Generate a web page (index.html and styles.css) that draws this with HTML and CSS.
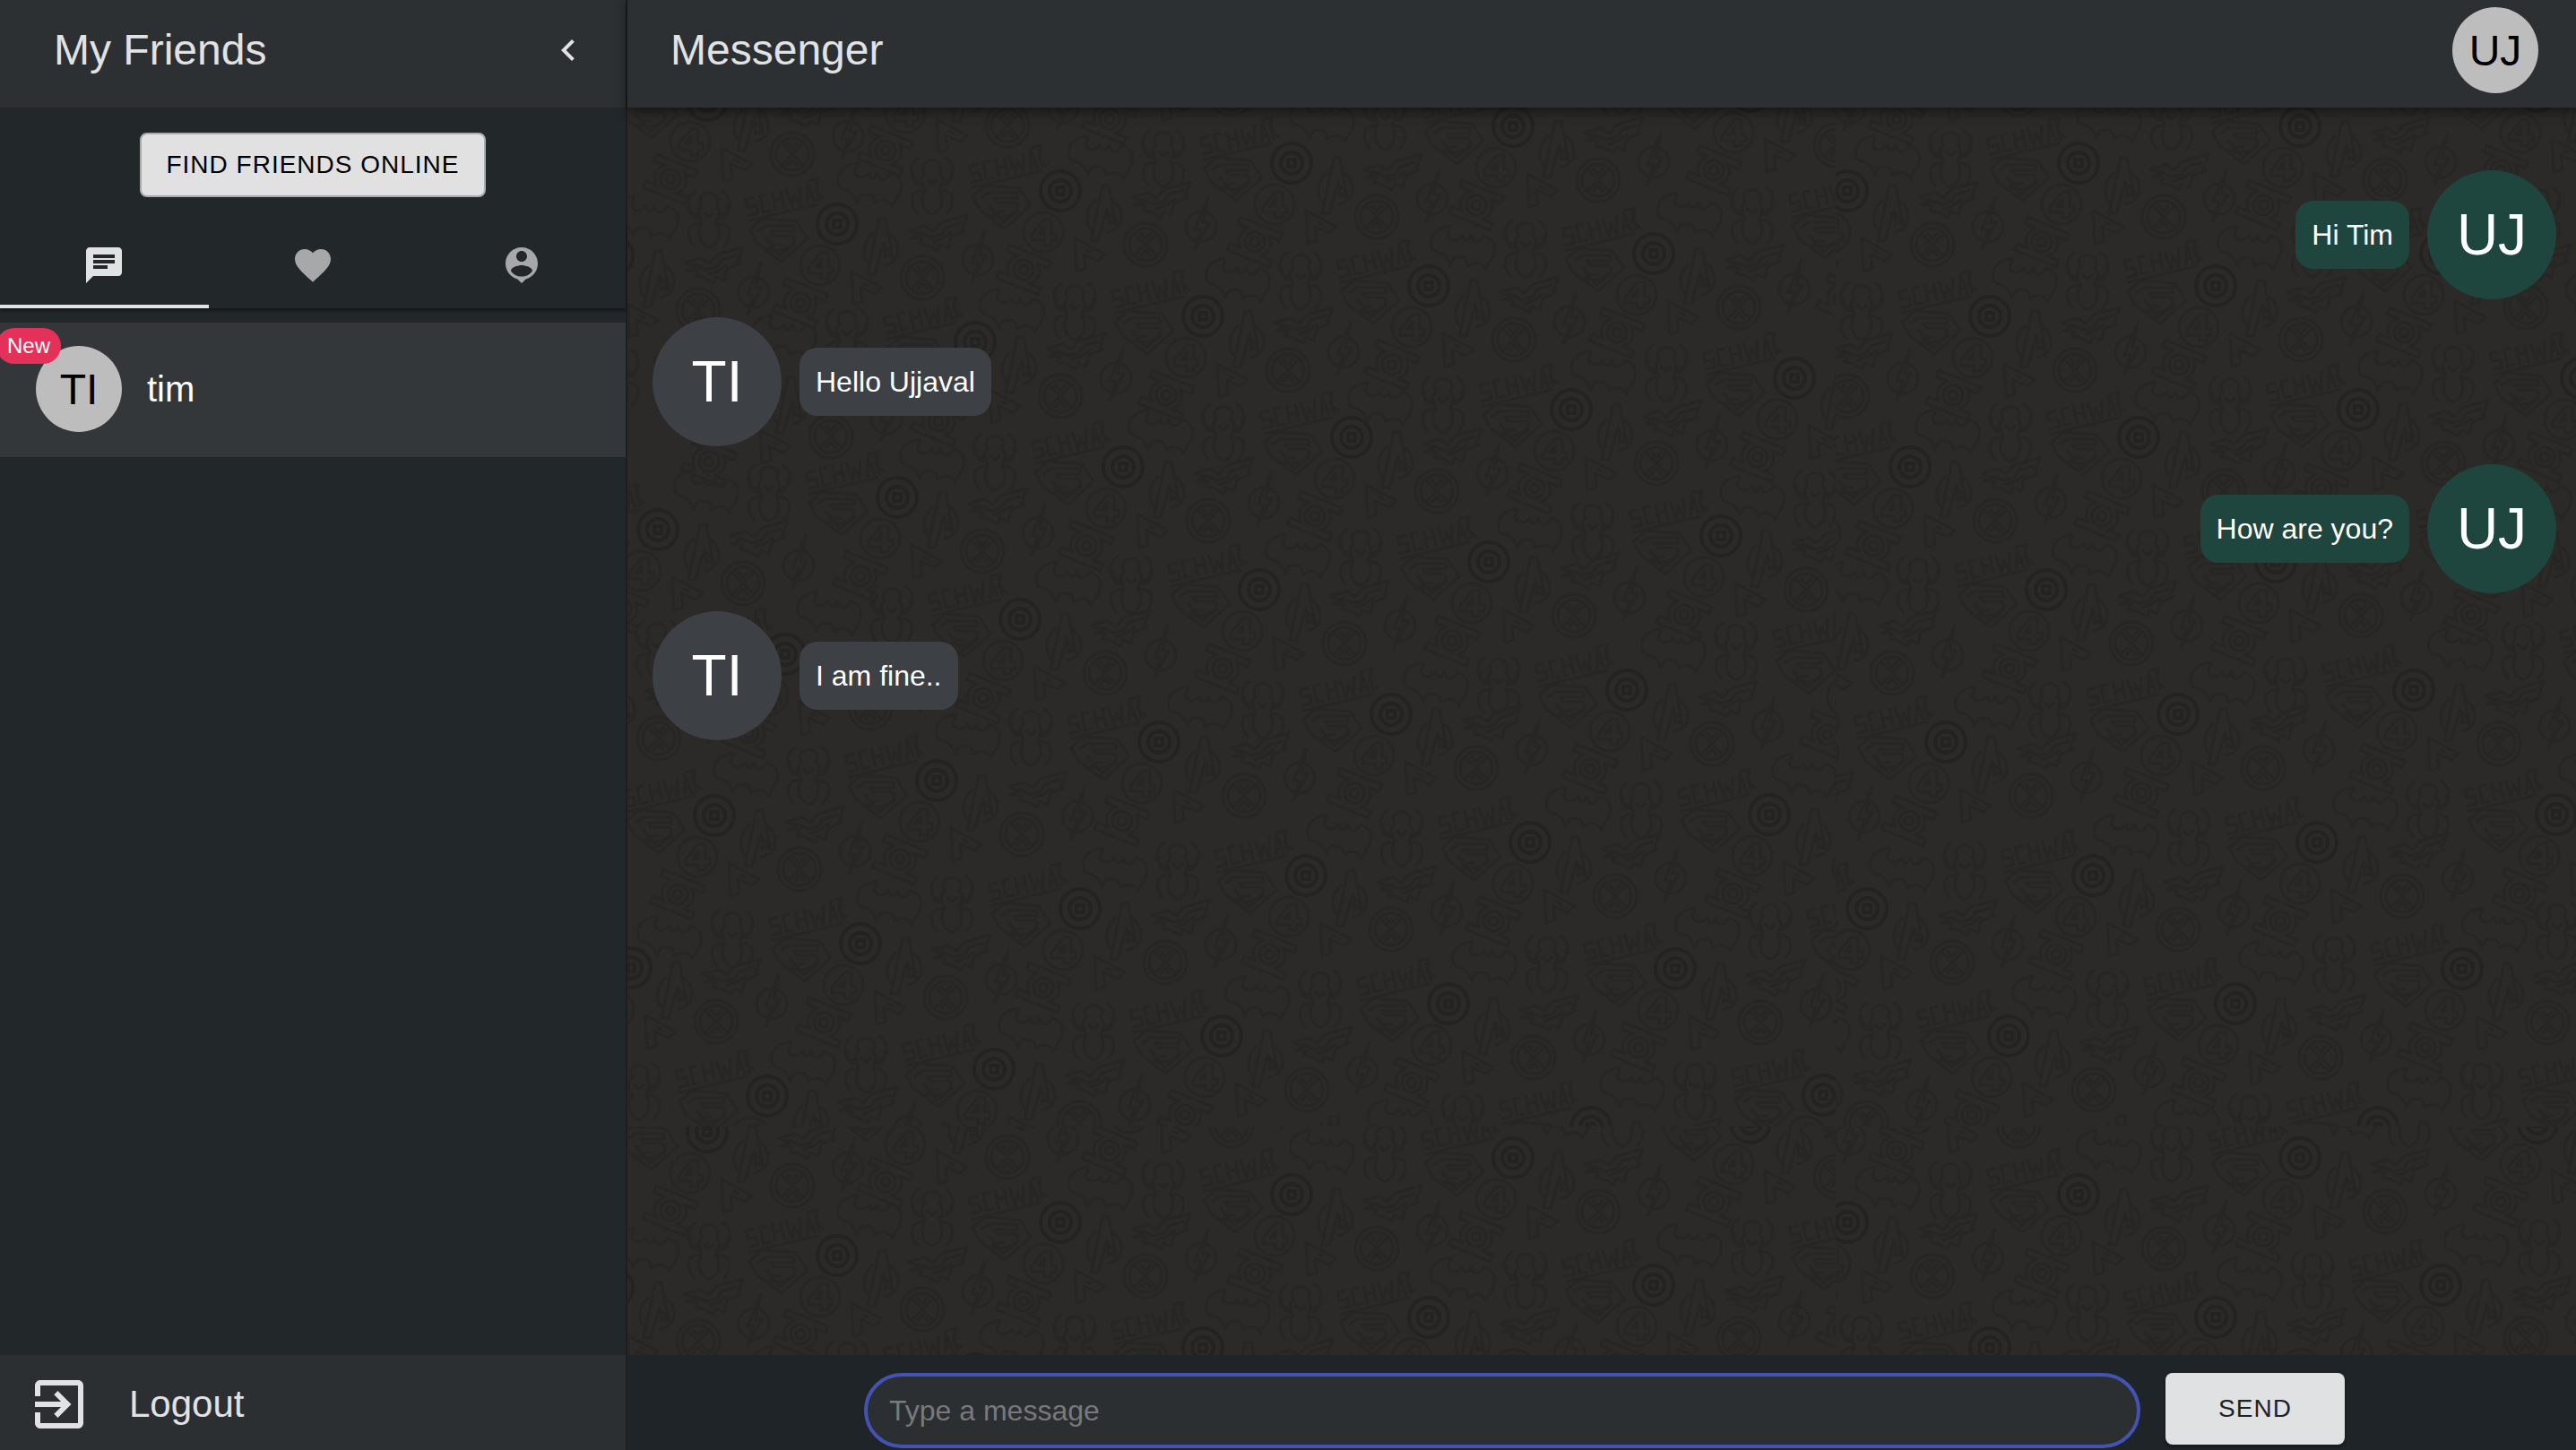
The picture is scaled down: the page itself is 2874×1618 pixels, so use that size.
FILE: index.html
```html
<!DOCTYPE html>
<html lang="en">
<head>
<meta charset="utf-8">
<title>Messenger</title>
<link rel="stylesheet" href="styles.css">
</head>
<body>
<div class="app">
  <aside class="sidebar">
    <header class="bar">
      <h2 class="title">My Friends</h2>
      <button class="icon-button" type="button" aria-label="Close friends list">
        <svg class="icon" viewBox="0 0 24 24"><path d="M15.41 7.41L14 6l-6 6 6 6 1.41-1.41L10.83 12z"/></svg>
      </button>
    </header>
    <div class="find">
      <button class="find-button" type="button">FIND FRIENDS ONLINE</button>
    </div>
    <nav class="tabs" role="tablist">
      <button class="tab tab-active" type="button" role="tab" aria-selected="true" aria-label="Chats">
        <svg class="icon" viewBox="0 0 24 24"><path d="M20 2H4c-1.1 0-1.99.9-1.99 2L2 22l4-4h14c1.1 0 2-.9 2-2V4c0-1.1-.9-2-2-2zM6 9h12v2H6V9zm8 5H6v-2h8v2zm4-6H6V6h12v2z"/></svg>
      </button>
      <button class="tab" type="button" role="tab" aria-selected="false" aria-label="Favourites">
        <svg class="icon" viewBox="0 0 24 24"><path d="M12 21.35l-1.45-1.32C5.4 15.36 2 12.28 2 8.5 2 5.42 4.42 3 7.5 3c1.74 0 3.41.81 4.5 2.09C13.09 3.81 14.76 3 16.5 3 19.58 3 22 5.42 22 8.5c0 3.78-3.4 6.86-8.55 11.54L12 21.35z"/></svg>
      </button>
      <button class="tab" type="button" role="tab" aria-selected="false" aria-label="People">
        <svg class="icon" viewBox="0 0 24 24"><path d="M12 2c-4.97 0-9 4.03-9 9 0 4.17 2.84 7.67 6.69 8.69L12 22l2.31-2.31C18.16 18.67 21 15.17 21 11c0-4.97-4.03-9-9-9zm0 2c1.66 0 3 1.34 3 3s-1.34 3-3 3-3-1.34-3-3 1.34-3 3-3zm0 14.3c-2.5 0-4.71-1.28-6-3.22.03-1.99 4-3.08 6-3.08 1.99 0 5.97 1.09 6 3.08-1.29 1.94-3.5 3.22-6 3.22z"/></svg>
      </button>
    </nav>
    <ul class="friends">
      <li class="friend">
        <span class="avatar avatar-small">TI<span class="badge">New</span></span>
        <span class="friend-name">tim</span>
      </li>
    </ul>
    <button class="logout" type="button">
      <svg class="icon-large" viewBox="0 0 24 24"><path d="M10.09 15.59L11.5 17l5-5-5-5-1.41 1.41L12.67 11H3v2h9.67l-2.58 2.59zM19 3H5c-1.11 0-2 .9-2 2v4h2V5h14v14H5v-4H3v4c0 1.1.89 2 2 2h14c1.1 0 2-.9 2-2V5c0-1.1-.9-2-2-2z"/></svg>
      Logout
    </button>
  </aside>

  <main class="chat">
    <header class="bar chat-bar">
      <h1 class="title">Messenger</h1>
      <span class="avatar avatar-small">UJ</span>
    </header>

    <section class="messages">
      <svg class="wallpaper" aria-hidden="true">
        <defs>
          <g id="motif">
            <g class="ring">
              <circle r="22"/><circle r="12"/>
              <path d="M-4-4H4V4H-4Z"/>
            </g>
            <g transform="translate(49 25)">
              <path d="M-2-31H5L13 13L5 9L3-4L-7 31H-15Z"/>
              <path d="M-9-15C-24-2-20 16-12 21M10-14C24-2 22 18 3 21"/>
              <path d="M2-2L13 8L3 12"/>
            </g>
            <g transform="translate(112 12)">
              <path d="M-32-5L-14-10L-5-4L4-14L33-22L27-6L30-4L15 2L12 15L3 11L0 18L-10 12L-20 10L-17 4L-30 4L-20 0Z"/>
              <path d="M-22-3L-8 3L4 0L9-8L26-13M-6 8L6 4L16-3"/>
            </g>
            <g transform="translate(95 60)">
              <circle r="24"/><circle r="18"/>
              <path d="M-13-13L13 13M13-13L-13 13M-6-13L0-6L6-13M-6 13L0 6L6 13"/>
            </g>
            <g transform="translate(-19 46)">
              <circle r="22"/>
              <path d="M9 15V9H14V2H9V-14H1L-13 3V9H1V15ZM1 2H-5L1-6Z"/>
            </g>
            <g transform="translate(157 40)">
              <circle r="17"/>
              <path d="M8-33L-7 3H0L-7 25L9-5H2Z"/>
            </g>
            <g transform="translate(-41 88) rotate(22)">
              <circle r="11"/><circle r="5"/>
              <path d="M-25-20H25V-12H12C20-5 20 5 12 12H25V20H-25V12H-12C-20 5-20-5-12-12H-25Z"/>
            </g>
            <path transform="translate(32 73)" d="M-16-20L-14 17L-4 14L-6-2L10 5L18-2ZM-3-7L3-4"/>
            <g transform="translate(-66 17)">
              <path d="M-32-11L-18-23L20-20L33-1L4 25L-24 4Z"/>
              <path d="M-23-9L-14-15H18V-9H-8L-5-4H16C24 4 10 12 1 12H-12L-6 6H4M-14-2L2 18L20 4"/>
            </g>
            <path transform="translate(-61 -28) rotate(-12)" d="M-30-8H-40V1H-30V10H-42M-16-9H-24V10H-15M-10-10V11M-10 0H0M0-10V11M6-10L9 11L14-2L18 11L22-10M26 11L31-11L35 11M27 4H34M40-11V11M31-14H43L38 0L46 9M-42 16L38 14"/>
            <g transform="translate(-143 -5)">
              <path d="M-8-15C-18-34 18-34 8-15C16-8 8 0 8 4C16 18 6 31 0 31C-6 31-16 18-8 4C-8 0-16-8-8-15Z"/>
              <path d="M-10-6C-28-2-26-28-14-32M10-6C28-2 26-28 14-32M-8 5C-26 2-26 20-16 31M8 5C26 2 26 20 16 31M-11-2C-20 0-22-10-21-17M11-2C20 0 22-10 21-17M-6-8L0-3L6-8"/>
            </g>
            <path transform="translate(-213 -7) rotate(6)" d="M-36-3C-36-14-26-20-16-22L-18-12C-15-5-5-6-2-13L1-8H5L8-14C10-5 18-5 22-15C34-14 38-4 34 8C30 16 28 20 28 22C24 14 14 14 8 20C6 12 2 10-2 12C-8 10-10 14-12 22C-16 12-22 8-30 8C-35 6-36 2-36-3Z"/>
          </g>

          <g id="tile">
            <use href="#motif" x="1279" y="45"/><use href="#motif" x="1029" y="80"/><use href="#motif" x="789" y="112"/>
            <use href="#motif" x="2210" y="66"/><use href="#motif" x="1953" y="102"/><use href="#motif" x="1688" y="141"/><use href="#motif" x="1441" y="182"/><use href="#motif" x="1183" y="213"/><use href="#motif" x="934" y="250"/><use href="#motif" x="684" y="286"/>
            <use href="#motif" x="2098" y="246"/><use href="#motif" x="1845" y="283"/><use href="#motif" x="1594" y="319"/><use href="#motif" x="1342" y="353"/><use href="#motif" x="1088" y="382"/><use href="#motif" x="832" y="427"/>
            <use href="#motif" x="2002" y="422"/><use href="#motif" x="1753" y="457"/><use href="#motif" x="1508" y="488"/><use href="#motif" x="1253" y="521"/><use href="#motif" x="1001" y="555"/><use href="#motif" x="734" y="591"/>
            <use href="#motif" x="2168" y="562"/><use href="#motif" x="1920" y="598"/><use href="#motif" x="1661" y="627"/><use href="#motif" x="1405" y="658"/><use href="#motif" x="1138" y="691"/><use href="#motif" x="876" y="730"/><use href="#motif" x="640" y="764"/>
            <use href="#motif" x="2080" y="732"/><use href="#motif" x="1815" y="770"/><use href="#motif" x="1552" y="797"/><use href="#motif" x="1293" y="828"/><use href="#motif" x="1045" y="871"/><use href="#motif" x="797" y="910"/>
            <use href="#motif" x="2226" y="872"/><use href="#motif" x="1974" y="909"/><use href="#motif" x="1707" y="940"/><use href="#motif" x="1457" y="977"/><use href="#motif" x="1205" y="1014"/><use href="#motif" x="960" y="1053"/><use href="#motif" x="704" y="1080"/>
            <use href="#motif" x="2118" y="1044"/><use href="#motif" x="1869" y="1081"/><use href="#motif" x="1616" y="1120"/><use href="#motif" x="1363" y="1156"/><use href="#motif" x="1109" y="1193"/><use href="#motif" x="856" y="1223"/>
            <use href="#motif" x="2034" y="1222"/><use href="#motif" x="1775" y="1258"/><use href="#motif" x="1516" y="1295"/><use href="#motif" x="1260" y="1330"/>
          </g>
          <clipPath id="edge-left"><rect x="600" y="106" width="1448" height="1151"/></clipPath>
          <clipPath id="edge-right"><rect x="1170" y="106" width="878" height="1151"/></clipPath>
          <g id="band">
            <g clip-path="url(#edge-left)"><use href="#tile"/></g>
            <g transform="translate(878 0)"><g clip-path="url(#edge-right)"><use href="#tile"/></g></g>
          </g>
        </defs>
        <g transform="translate(-700 -120)">
          <use href="#band"/>
          <use href="#band" y="1151"/>
        </g>
      </svg>

      <div class="message message-own"><p class="bubble">Hi Tim</p><span class="avatar avatar-large">UJ</span></div>
      <div class="message"><span class="avatar avatar-large">TI</span><p class="bubble">Hello Ujjaval</p></div>
      <div class="message message-own"><p class="bubble">How are you?</p><span class="avatar avatar-large">UJ</span></div>
      <div class="message"><span class="avatar avatar-large">TI</span><p class="bubble">I am fine..</p></div>
    </section>

    <form class="composer">
      <input class="composer-input" type="text" placeholder="Type a message" aria-label="Type a message">
      <button class="send" type="button">SEND</button>
    </form>
  </main>
</div>
</body>
</html>
```
FILE: styles.css
```css
* {
  box-sizing: border-box;
}

body {
  margin: 0;
  background: #22272b;
  color: #e1e2e4;
  font-family: "Liberation Sans", Arial, sans-serif;
  font-size: 32px;
}

button,
input {
  margin: 0;
  padding: 0;
  border: 0;
  background: none;
  color: inherit;
  font: inherit;
}

.app {
  display: grid;
  grid-template-columns: 700px 1fr;
  min-height: 100vh;
}

.sidebar {
  display: flex;
  flex-direction: column;
  background: #22272a;
  border-right: 2px solid #1b1f22;
}

.bar {
  display: flex;
  align-items: center;
  justify-content: space-between;
  height: 120px;
  padding: 0 40px 8px 60px;
  background: #2c3033;
}

.title {
  margin: 0;
  font-size: 48px;
  font-weight: 400;
  line-height: 64px;
}

.icon-button {
  display: flex;
}

.icon {
  width: 48px;
  height: 48px;
  fill: currentColor;
}

.icon-large {
  width: 72px;
  height: 72px;
  fill: currentColor;
}

.find {
  display: flex;
  justify-content: center;
  padding: 28px 0;
}

.find-button {
  height: 72px;
  padding: 0 27px;
  border: 2px solid #a9aaac;
  border-radius: 8px;
  background: #e1e1e1;
  color: #000;
  font-size: 28px;
  letter-spacing: 1px;
}

.tabs {
  display: grid;
  grid-template-columns: repeat(3, 1fr);
  height: 96px;
  box-shadow: 0 3px 3px rgba(0, 0, 0, 0.4);
}

.tab {
  display: flex;
  align-items: center;
  justify-content: center;
  color: #a6a8aa;
}

.tab-active {
  padding-top: 4px;
  border-bottom: 4px solid #e1e1e1;
  color: #e1e2e4;
}

.friends {
  flex: 1;
  margin: 0;
  padding: 16px 0 0;
  list-style: none;
}

.friend {
  display: flex;
  align-items: center;
  gap: 28px;
  height: 150px;
  padding: 0 40px 2px;
  background: #33373a;
}

.friend-name {
  color: #fff;
  font-size: 40px;
}

.avatar {
  position: relative;
  display: flex;
  flex: none;
  align-items: center;
  justify-content: center;
  border-radius: 50%;
}

.avatar-small {
  width: 96px;
  height: 96px;
  background: #bdbdbd;
  color: #000;
  font-size: 48px;
}

.avatar-large {
  width: 144px;
  height: 144px;
  background: #3d4045;
  color: #fff;
  font-size: 64px;
}

.badge {
  position: absolute;
  top: -20px;
  right: 68px;
  height: 40px;
  padding: 0 12px;
  border-radius: 20px;
  background: #e43159;
  color: #fff;
  font-size: 24px;
  line-height: 40px;
}

.logout {
  display: flex;
  align-items: center;
  gap: 42px;
  height: 106px;
  padding: 4px 30px 0;
  background: #2c2f32;
  font-size: 42px;
}

.chat {
  display: flex;
  flex-direction: column;
  min-width: 0;
}

.chat-bar {
  z-index: 1;
  padding: 0 42px 8px 48px;
  box-shadow: 0 4px 12px rgba(0, 0, 0, 0.5);
}

.messages {
  position: relative;
  display: flex;
  flex: 1;
  flex-direction: column;
  gap: 20px;
  padding: 70px 22px 20px 28px;
  background: #2b2a28;
}

.wallpaper {
  position: absolute;
  inset: 0;
  width: 100%;
  height: 100%;
  overflow: hidden;
  fill: none;
  stroke: #272624;
  stroke-width: 3;
  stroke-linejoin: round;
}

.ring {
  stroke: #242321;
  stroke-width: 4;
}

.message {
  position: relative;
  display: flex;
  align-items: center;
  gap: 20px;
}

.message-own {
  justify-content: flex-end;
}

.bubble {
  margin: 0;
  padding: 18px;
  border-radius: 20px;
  background: #3d4045;
  color: #fff;
  line-height: 40px;
}

.message-own .bubble,
.message-own .avatar-large {
  background: #1f453f;
}

.composer {
  display: flex;
  align-items: flex-start;
  justify-content: center;
  gap: 28px;
  height: 106px;
  padding: 20px 0 0 6px;
  background: #1f2428;
}

.composer-input {
  flex: 0 1 1424px;
  min-width: 0;
  height: 84px;
  padding: 0 24px;
  border: 4px solid #4353b3;
  border-radius: 42px;
  background: #2c2f32;
  outline: none;
}

.composer-input::placeholder {
  color: #78797b;
  opacity: 1;
}

.send {
  width: 200px;
  height: 80px;
  border-radius: 8px;
  background: #e0e1e3;
  box-shadow: 0 2px 4px rgba(0, 0, 0, 0.4);
  color: #202123;
  font-size: 28px;
  letter-spacing: 1px;
}
```
